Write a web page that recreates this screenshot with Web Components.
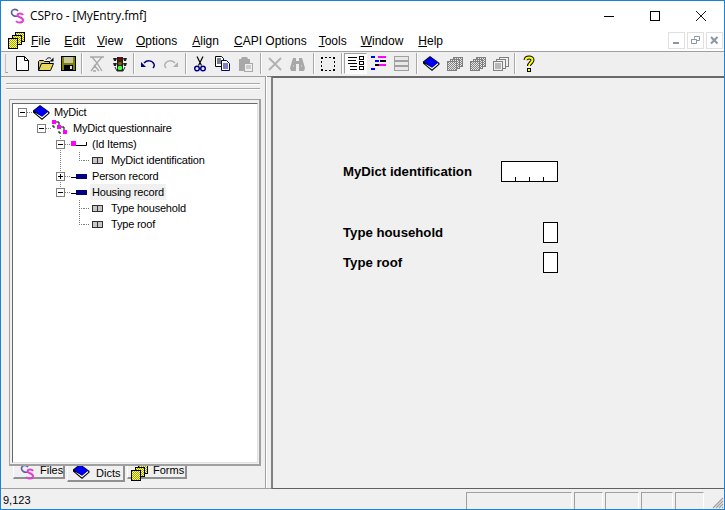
<!DOCTYPE html>
<html>
<head>
<meta charset="utf-8">
<title>CSPro</title>
<style>
  html, body { margin: 0; padding: 0; background: #f0f0f0; }
  body { font: 12px "Liberation Sans", sans-serif; color: #000; }
</style>
</head>
<body>
<cs-app></cs-app>

<script>
const dither = `<pattern id="d" width="2" height="2" patternUnits="userSpaceOnUse"><rect width="2" height="2" fill="#e8e8e8"/><rect width="1" height="1" fill="#808080"/><rect x="1" y="1" width="1" height="1" fill="#808080"/></pattern>`;
const ditherY = `<pattern id="y" width="2" height="2" patternUnits="userSpaceOnUse"><rect width="2" height="2" fill="#ffff66"/><rect width="1" height="1" fill="#a0a020"/><rect x="1" y="1" width="1" height="1" fill="#a0a020"/></pattern>`;

const bookShape = `
  <path d="M7 0 0 5.500v2L9 15l7.500-6.500V7z" fill="#000"/>
  <path d="M1.500 7.500 9 13.500l6.500-5.500-1-1L9 11.500z" fill="#fff"/>
  <path d="M7 1 1 5.700 9 11.800l6.200-5.300z" fill="#0000f0"/>`;

const stack = fill => `
  <rect x="6.500" y=".5" width="9" height="9" fill="${fill}" stroke="#808080"/>
  <rect x="3.500" y="2.500" width="9" height="9" fill="${fill}" stroke="#808080"/>
  <rect x=".5" y="4.500" width="9" height="9" fill="${fill}" stroke="#808080"/>`;

const ICONS = {
  app: [15, 16, `
    <path d="M8 3C6 .5 2 1 1.500 4c-.4 3 3 5 6.500 4" fill="none" stroke="#5a5aa8" stroke-width="1.600"/>
    <path d="M13 7c-1-2-5-2-5.500 0-.5 2.500 5.500 2 5.500 5 0 3-5 3.500-7 1" fill="none" stroke="#e040d0" stroke-width="2"/>`],
  forms: [17, 17, `${ditherY}
    <rect x="7.500" y=".5" width="9" height="9" fill="url(#y)" stroke="#000"/>
    <rect x="4.500" y="3.500" width="9" height="9" fill="url(#y)" stroke="#000"/>
    <rect x=".5" y="6.500" width="9" height="10" fill="url(#y)" stroke="#000"/>`],
  file: [13, 15, `<path d="M.5.5h8l4 4v10H.5z" fill="#fff" stroke="#000"/><path d="M8.500.5v4h4" fill="none" stroke="#000"/>`],
  open: [16, 14, `
    <path d="M.5 13.500v-9l1-1h4l1 1h5v2" fill="#d8c860" stroke="#000"/>
    <path d="M.5 13.500l3-7h12l-3 7z" fill="#e8d860" stroke="#000"/>
    <path d="M8 3c1-2 3-3 5-1.500" fill="none" stroke="#000"/><path d="M15.500.5v4h-4z" fill="#000"/>`],
  save: [15, 15, `
    <rect x=".5" y=".5" width="14" height="14" fill="#808000" stroke="#000"/>
    <rect x="3" y="1" width="9" height="6" fill="#c8c8a0"/>
    <rect x="3" y="9" width="9" height="5" fill="#000"/>
    <rect x="9" y="10" width="2" height="3" fill="#e0e0e0"/>`],
  filter: [16, 16, `
    <path d="M1 1h14M3 1l5 6 5-6M8 7l-6 8M8 7l5 8M4 15h3M5 9l5 6" fill="none" stroke="#a8a8a8" stroke-width="1.300"/>`],
  traffic: [16, 16, `
    <path d="M5 1h6v14H5zM1 2h4l-1 3H2zM15 2h-4l1 3h2zM1 7h4l-1 3H2zM15 7h-4l1 3h2z" fill="#202020"/>
    <circle cx="8" cy="3" r="1.800" fill="#900000"/>
    <circle cx="8" cy="7.500" r="1.800" fill="#806000"/>
    <circle cx="8" cy="12" r="2.300" fill="#40ff40"/>
    <path d="M3 11l2 4h6l2-4" fill="none" stroke="#202020"/>`],
  undo: [14, 10, `
    <path d="M3 4C6 1 11 1 13 5c.5 1.500 0 3-1 4" fill="none" stroke="#000080" stroke-width="1.500"/>
    <path d="M0 3l5 5H0z" fill="#000080"/>`],
  redo: [14, 10, `
    <path d="M11 4C8 1 3 1 1 5c-.5 1.500 0 3 1 4" fill="none" stroke="#b0b0b0" stroke-width="1.500"/>
    <path d="M14 3L9 8h5z" fill="#b0b0b0"/>`],
  cut: [12, 16, `
    <path d="M3 .5l4.500 9M9 .5L4.500 9.500" fill="none" stroke="#000" stroke-width="1.200"/>
    <circle cx="3" cy="12.500" r="2.300" fill="none" stroke="#000080" stroke-width="1.500"/>
    <circle cx="9" cy="12.500" r="2.300" fill="none" stroke="#000080" stroke-width="1.500"/>`],
  copy: [15, 15, `
    <path d="M.5.5h6l2 2v8H.5z" fill="#fff" stroke="#000"/>
    <path d="M2 3h4M2 5h5M2 7h5" stroke="#000"/>
    <path d="M6.500 4.500h5l3 3v7h-8z" fill="#fff" stroke="#000080"/>
    <path d="M8 8h5M8 10h5M8 12h5" stroke="#000080"/>`],
  paste: [15, 16, `
    <path d="M1 3h2l1-2h5l1 2h2v12H1z" fill="#a8a8a8"/>
    <rect x="6.500" y="7.500" width="8" height="8" fill="#f0f0f0" stroke="#a8a8a8"/>
    <path d="M8 10h5M8 12h5" stroke="#a8a8a8"/>`],
  del: [14, 14, `<path d="M1 1l12 12M13 1L1 13" stroke="#b0b0b0" stroke-width="1.800" fill="none"/>`],
  find: [15, 14, `
    <path d="M3 1h3v3h3V1h3l3 10-1 3H9V7H6v7H1l-1-3z" fill="#a8a8a8"/>
    <path d="M3 9h1M11 9h1" stroke="#e0e0e0"/>`],
  select: [14, 14, `
    <rect x="0" y="0" width="2" height="2"/><rect x="12" y="0" width="2" height="2"/>
    <rect x="0" y="12" width="2" height="2"/><rect x="12" y="12" width="2" height="2"/>
    <rect x="4" y="0" width="2" height="1"/><rect x="8" y="0" width="2" height="1"/>
    <rect x="4" y="13" width="2" height="1"/><rect x="8" y="13" width="2" height="1"/>
    <rect x="0" y="4" width="1" height="2"/><rect x="0" y="8" width="1" height="2"/>
    <rect x="13" y="4" width="1" height="2"/><rect x="13" y="8" width="1" height="2"/>`],
  logic: [16, 15, `
    <path d="M0 1.500h9M0 7.500h9M2 13.500h7" stroke="#000" stroke-width="1"/>
    <path d="M0 4.500h8M2 10.500h7" stroke="#000"/>
    <rect x="11.500" y=".5" width="4" height="3" fill="#fff" stroke="#000"/>
    <rect x="11.500" y="5.500" width="4" height="3" fill="#fff" stroke="#000"/>
    <rect x="11.500" y="10.500" width="4" height="3" fill="#fff" stroke="#000"/>`],
  order: [15, 15, `
    <rect x="0" y="0" width="4" height="2" fill="#0000ff"/><rect x="7" y="0" width="8" height="2" fill="#ff00ff"/>
    <rect x="4" y="4" width="4" height="2" fill="#0000ff"/><rect x="9" y="4" width="6" height="2" fill="#000"/>
    <rect x="4" y="8" width="4" height="2" fill="#000"/><rect x="8" y="8" width="7" height="2" fill="#ff00ff"/>
    <rect x="0" y="12" width="4" height="2" fill="#0000ff"/>`],
  rows: [15, 15, `
    <rect x=".5" y=".5" width="14" height="14" fill="#e8e8e8" stroke="#a0a0a0"/>
    <path d="M1 4.500h13M1 5.500h13M1 9.500h13M1 10.500h13" stroke="#a0a0a0"/>`],
  book: [17, 15, bookShape],
  grayStack: [16, 14, `${dither}${stack('url(#d)')}`],
  lineStack: [16, 14, `${stack('#f0f0f0')}<path d="M2 7h6M2 9h6M2 11h6" stroke="#808080"/>`],
  help: [12, 17, `
    <path d="M2.500 5C3 1.500 9.500 1.500 9.500 5c0 2.500-3.500 3-3.500 6" fill="none" stroke="#000" stroke-width="4"/>
    <rect x="4" y="13" width="4" height="4" fill="#000"/>
    <path d="M2.500 5C3 1.500 9.500 1.500 9.500 5c0 2.500-3.500 3-3.500 6" fill="none" stroke="#ffff00" stroke-width="2"/>
    <rect x="5" y="14" width="2" height="2" fill="#ffff00"/>`],
  quest: [17, 16, `
    <path d="M4 2h3v5M9 7h3v5" fill="none" stroke="#000"/>
    <path d="M1 5v2h2M7 11v2h2" fill="none" stroke="#000"/>
    <rect x="0" y="0" width="4" height="4" fill="#ff00ff"/>
    <rect x="5" y="5" width="4" height="4" fill="#ff00ff"/>
    <rect x="11" y="10" width="4" height="4" fill="#ff00ff"/>`],
  idItems: [16, 8, `
    <rect x="0" y="1" width="5" height="5" fill="#ff00ff"/>
    <path d="M5 5.500h10.500V2" fill="none" stroke="#000"/>`],
  record: [16, 6, `
    <path d="M0 4.500h5" stroke="#000"/>
    <rect x="5" y="1" width="11" height="5" fill="#000080"/>`],
  item: [11, 7, `
    <rect x=".5" y=".5" width="10" height="6" fill="#c8c8c8" stroke="#303030"/>
    <path d="M5.500 0v7" stroke="#303030"/>`],
  grip: [12, 12, `<path d="M11 1L1 11M11 4L4 11M11 7L7 11M11 10l-1 1" stroke="#a0a0a0" stroke-width="1.200"/>`]
};

class CsIcon extends HTMLElement {
  constructor() {
    super();
    const [w, h, body] = ICONS[this.getAttribute("name")];
    this.attachShadow({ mode: "open" }).innerHTML = `
      <style>:host { display: block; width: ${w}px; height: ${h}px; flex: none; } svg { display: block; }</style>
      <svg width="${w}" height="${h}" viewBox="0 0 ${w} ${h}">${body}</svg>`;
  }
}
customElements.define("cs-icon", CsIcon);

class CsTitleBar extends HTMLElement {
  constructor() {
    super();
    this.attachShadow({ mode: "open" }).innerHTML = `
      <style>
        :host { display: flex; align-items: center; height: 29px; background: #fff; padding-left: 9px; font: 12px "Open Sans", sans-serif; letter-spacing: -.15px; }
        .title { margin-left: 5px; flex: 1; }
        .btn { width: 46px; height: 29px; display: flex; align-items: center; justify-content: center; }
      </style>
      <cs-icon name="app"></cs-icon>
      <span class="title"><slot></slot></span>
      <div class="btn"><svg width="10" height="10"><path d="M0 5.500h10" stroke="#000"/></svg></div>
      <div class="btn"><svg width="10" height="10"><rect x=".5" y=".5" width="9" height="9" fill="none" stroke="#000"/></svg></div>
      <div class="btn"><svg width="10" height="10"><path d="M0 0l10 10M10 0L0 10" stroke="#000" stroke-width=".9"/></svg></div>`;
  }
}
customElements.define("cs-title-bar", CsTitleBar);

class CsMenuBar extends HTMLElement {
  constructor() {
    super();
    this.attachShadow({ mode: "open" }).innerHTML = `
      <style>
        :host { display: flex; align-items: center; height: 21px; background: #fff; padding: 0 1px 0 7px; border-bottom: 1px solid #a0a0a0; }
        .items { display: flex; flex: 1; margin-left: 6px; font-size: 12px; }
        .mdi { display: flex; gap: 2px; }
        .mdi div { width: 15px; height: 15px; border: 1px solid #e0e0e0; display: flex; align-items: center; justify-content: center; }
      </style>
      <cs-icon name="forms"></cs-icon>
      <div class="items"><slot></slot></div>
      <div class="mdi">
        <div><svg width="9" height="9"><rect x="1" y="6" width="6" height="2" fill="#8a96a4"/></svg></div>
        <div><svg width="9" height="9"><path d="M3.500 2.500V.5h5v4H6M.5 3.500h5v4h-5zM.5 3.500h5" fill="none" stroke="#8a96a4"/></svg></div>
        <div><svg width="9" height="9"><path d="M1 1l6.500 6.500M7.500 1L1 7.500" stroke="#8a96a4" stroke-width="2"/></svg></div>
      </div>`;
  }
}
customElements.define("cs-menu-bar", CsMenuBar);

class CsMenuItem extends HTMLElement {
  constructor() {
    super();
    this.attachShadow({ mode: "open" }).innerHTML = `
      <style>:host { display: block; white-space: nowrap; margin-right: var(--gap, 13px); }</style>
      <slot></slot>`;
    this.style.setProperty("--gap", (this.getAttribute("gap") || 13) + "px");
  }
}
customElements.define("cs-menu-item", CsMenuItem);

class CsToolBar extends HTMLElement {
  constructor() {
    super();
    this.attachShadow({ mode: "open" }).innerHTML = `
      <style>
        :host { display: flex; align-items: center; height: 23px; background: #efefef; padding-left: 4px; }
        .grip { width: 2px; height: 18px; border-left: 1px solid #c0c0c0; border-bottom: 1px solid #a0a0a0; margin-right: 3px; }
      </style>
      <div class="grip"></div>
      <slot></slot>`;
  }
}
customElements.define("cs-tool-bar", CsToolBar);

class CsToolBtn extends HTMLElement {
  constructor() {
    super();
    this.attachShadow({ mode: "open" }).innerHTML = `
      <style>
        :host { display: flex; align-items: center; justify-content: center; width: 23px; height: 21px; box-sizing: border-box; }
        :host([pressed]) { background: #fafafa; border: 1px solid; border-color: #a0a0a0 #fff #fff #a0a0a0; }
      </style>
      <cs-icon name="${this.getAttribute("icon")}"></cs-icon>`;
  }
}
customElements.define("cs-tool-btn", CsToolBtn);

class CsToolSep extends HTMLElement {
  constructor() {
    super();
    const w = this.getAttribute("w") || 5;
    const o = this.getAttribute("o") || 2;
    this.attachShadow({ mode: "open" }).innerHTML = `
      <style>
        :host { display: block; width: ${w}px; height: 21px; box-sizing: border-box; padding-left: ${o}px; }
        div { width: 1px; height: 21px; background: #a8a8a8; border-right: 1px solid #fff; }
      </style>
      <div></div>`;
  }
}
customElements.define("cs-tool-sep", CsToolSep);

class CsTreeNode extends HTMLElement {
  constructor() {
    super();
    const exp = this.getAttribute("exp");
    const mark = exp === "plus"
      ? `<path d="M2 4.500h5M4.500 2v5" stroke="#000"/>`
      : `<path d="M2 4.500h5" stroke="#000"/>`;
    const box = exp
      ? `<svg class="box" width="9" height="9"><rect x=".5" y=".5" width="8" height="8" fill="#fff" stroke="#808080"/>${mark}</svg>`
      : `<span class="leaf"></span>`;
    this.attachShadow({ mode: "open" }).innerHTML = `
      <style>
        :host { display: block; position: relative; }
        /* dotted connector back to the parent row */
        :host::before { content: ""; position: absolute; left: 4px; top: 0; width: 1px; height: 8px;
          background: repeating-linear-gradient(180deg, #808080 0 1px, transparent 1px 2px); }
        :host(:not(:last-child))::before { height: 100%; }
        :host([root])::before, :host([noline])::before { display: none; }
        .row { display: flex; align-items: center; height: 16px; position: relative; }
        .box { display: block; flex: none; position: relative; }
        .leaf { display: block; flex: none; width: 5px; height: 1px; margin-left: 4px;
          background: repeating-linear-gradient(90deg, #808080 0 1px, transparent 1px 2px); }
        .dots { width: 6px; height: 1px; flex: none;
          background: repeating-linear-gradient(90deg, #808080 0 1px, transparent 1px 2px); }
        .icon { width: 17px; flex: none; display: flex; }
        .text { margin-left: 2px; padding: 0 2px; line-height: 16px; white-space: nowrap; font-size: 11px; letter-spacing: -.2px; }
        :host([selected]) .text { background: #f0f0f0; }
        .kids { padding-left: 19px; }
      </style>
      <div class="row">
        ${box}
        <span class="dots"></span>
        <span class="icon"><cs-icon name="${this.getAttribute("icon")}" style="${this.getAttribute("icon-style") || ""}"></cs-icon></span>
        <span class="text">${this.getAttribute("label")}</span>
      </div>
      <div class="kids"><slot></slot></div>`;
  }
}
customElements.define("cs-tree-node", CsTreeNode);

class CsTab extends HTMLElement {
  constructor() {
    super();
    this.attachShadow({ mode: "open" }).innerHTML = `
      <style>
        :host { display: flex; align-items: flex-start; box-sizing: border-box; height: 15px; background: #f0f0f0;
          border: solid #909090; border-width: 0 2px 2px 1px; border-left-color: #fff; margin-right: 2px; flex: none; font-size: 11px; }
        :host([active]) { height: 18px; }
        .lbl { line-height: 12px; }
        :host([active]) .lbl { line-height: 19px; }
      </style>
      <cs-icon name="${this.getAttribute("icon")}"></cs-icon>
      <span class="lbl"><slot></slot></span>`;
    this.style.width = this.getAttribute("w") + "px";
    this.style.paddingLeft = this.getAttribute("pad") + "px";
    this.shadowRoot.querySelector(".lbl").style.marginLeft = this.getAttribute("gap") + "px";
  }
}
customElements.define("cs-tab", CsTab);

class CsSidePane extends HTMLElement {
  constructor() {
    super();
    this.attachShadow({ mode: "open" }).innerHTML = `
      <style>
        :host { display: flex; flex-direction: column; width: 264px; box-sizing: border-box; flex: none;
          border-top: 1px solid #a0a0a0; border-bottom: 1px solid #a0a0a0; background: #f0f0f0; }
        .gripper { margin: 6px 5px 0 5px; height: 4px; border-top: 1px solid #a8a8a8; border-bottom: 1px solid #a8a8a8;
          box-shadow: 0 1px 0 #fff, inset 0 1px 0 #fff; flex: none; }
        .tree { flex: 1; min-height: 0; margin: 10px 4px 0 8px; position: relative; z-index: 1;
          border: solid #a0a0a0; border-width: 1px 2px 2px 1px; padding: 3px 1px 1px 2px; background: #f0f0f0; display: flex; }
        .inner { flex: 1; background: #fff; border: 1px solid; border-color: #696969 #e0e0e0 #e0e0e0 #696969; padding-left: 5px; overflow: hidden; }
        .tabs { display: flex; margin: -2px 0 6px 12px; height: 18px; flex: none; overflow: visible; }
      </style>
      <div class="gripper"></div>
      <div class="tree"><div class="inner"><slot name="tree"></slot></div></div>
      <div class="tabs"><slot name="tabs"></slot></div>`;
  }
}
customElements.define("cs-side-pane", CsSidePane);

class CsFormRow extends HTMLElement {
  constructor() {
    super();
    const width = this.getAttribute("box") === "id" ? 57 : 15;
    const ticks = width === 57 ? `
      <svg width="55" height="19" style="display:block"><path d="M13.500 15v4M27.500 15v4M41.500 15v4" stroke="#000"/></svg>` : "";
    this.attachShadow({ mode: "open" }).innerHTML = `
      <style>
        :host { display: flex; justify-content: space-between; align-items: center; width: 215px; height: 21px; }
        .lbl { font: bold 13.200px "Liberation Sans", sans-serif; white-space: nowrap; }
        .box { box-sizing: border-box; width: ${width}px; height: 21px; background: #fff; border: 1px solid #000; }
      </style>
      <span class="lbl"><slot></slot></span>
      <div class="box">${ticks}</div>`;
  }
}
customElements.define("cs-form-row", CsFormRow);

class CsFormView extends HTMLElement {
  constructor() {
    super();
    this.attachShadow({ mode: "open" }).innerHTML = `
      <style>
        :host { display: flex; flex-direction: column; flex: 1; min-width: 0; box-sizing: border-box; background: #f0f0f0;
          border-left: 2px solid #808080; border-top: 2px solid #696969; border-bottom: 1px solid #606060; padding: 83px 0 0 70px; }
      </style>
      <slot></slot>`;
  }
}
customElements.define("cs-form-view", CsFormView);

class CsStatusBar extends HTMLElement {
  constructor() {
    super();
    this.attachShadow({ mode: "open" }).innerHTML = `
      <style>
        :host { display: flex; align-items: flex-end; height: 20px; background: #f0f0f0; padding-left: 2px; position: relative; font-size: 11px; }
        .msg { flex: 1; align-self: center; position: relative; top: 1px; }
        .cell { box-sizing: border-box; height: 17px; border: solid; border-width: 1px 1px 0 1px; border-color: #a0a0a0 #fff #a0a0a0 #a0a0a0; margin-right: 2px; }
        .grip { position: absolute; right: 0; bottom: 0; }
      </style>
      <span class="msg"><slot></slot></span>
      <div class="cell" style="width:106px"></div>
      <div class="cell" style="width:29px"></div>
      <div class="cell" style="width:34px"></div>
      <div class="cell" style="width:32px"></div>
      <div class="cell" style="width:29px;margin-right:20px"></div>
      <cs-icon class="grip" name="grip"></cs-icon>`;
  }
}
customElements.define("cs-status-bar", CsStatusBar);

class CsApp extends HTMLElement {
  constructor() {
    super();
    this.attachShadow({ mode: "open" }).innerHTML = `
      <style>
        :host { display: flex; flex-direction: column; width: 725px; height: 510px; box-sizing: border-box;
          border: 1px solid #1883d7; overflow: hidden; background: #f0f0f0; font: 12px "Liberation Sans", sans-serif; }
        .main { flex: 1; min-height: 0; display: flex; border-top: 1px solid #f0f0f0; box-shadow: inset 0 1px 0 #808080; }
        .split { width: 6px; flex: none; box-sizing: border-box; border-left: 1px solid #a0a0a0; box-shadow: inset 1px 0 0 #fff; border-bottom: 1px solid #a0a0a0; }
        cs-form-row.gap { margin-top: 40px; }
        cs-form-row.near { margin-top: 9px; }
        u { text-underline-offset: 1px; }
      </style>
      <cs-title-bar>CSPro - [MyEntry.fmf]</cs-title-bar>
      <cs-menu-bar>
        <cs-menu-item gap="14"><u>F</u>ile</cs-menu-item>
        <cs-menu-item gap="12"><u>E</u>dit</cs-menu-item>
        <cs-menu-item gap="13"><u>V</u>iew</cs-menu-item>
        <cs-menu-item gap="15"><u>O</u>ptions</cs-menu-item>
        <cs-menu-item gap="15"><u>A</u>lign</cs-menu-item>
        <cs-menu-item gap="12"><u>C</u>API Options</cs-menu-item>
        <cs-menu-item gap="14"><u>T</u>ools</cs-menu-item>
        <cs-menu-item gap="15"><u>W</u>indow</cs-menu-item>
        <cs-menu-item gap="0"><u>H</u>elp</cs-menu-item>
      </cs-menu-bar>
      <cs-tool-bar>
        <cs-tool-btn icon="file"></cs-tool-btn>
        <cs-tool-btn icon="open"></cs-tool-btn>
        <cs-tool-btn icon="save"></cs-tool-btn>
        <cs-tool-sep w="5" o="1"></cs-tool-sep>
        <cs-tool-btn icon="filter"></cs-tool-btn>
        <cs-tool-btn icon="traffic"></cs-tool-btn>
        <cs-tool-sep w="5" o="2"></cs-tool-sep>
        <cs-tool-btn icon="undo"></cs-tool-btn>
        <cs-tool-btn icon="redo"></cs-tool-btn>
        <cs-tool-sep w="6" o="3"></cs-tool-sep>
        <cs-tool-btn icon="cut"></cs-tool-btn>
        <cs-tool-btn icon="copy"></cs-tool-btn>
        <cs-tool-btn icon="paste"></cs-tool-btn>
        <cs-tool-sep w="6" o="3"></cs-tool-sep>
        <cs-tool-btn icon="del"></cs-tool-btn>
        <cs-tool-btn icon="find"></cs-tool-btn>
        <cs-tool-sep w="7" o="4"></cs-tool-sep>
        <cs-tool-btn icon="select"></cs-tool-btn>
        <cs-tool-sep w="5" o="2"></cs-tool-sep>
        <cs-tool-btn icon="logic" pressed></cs-tool-btn>
        <cs-tool-btn icon="order"></cs-tool-btn>
        <cs-tool-btn icon="rows"></cs-tool-btn>
        <cs-tool-sep w="7" o="3"></cs-tool-sep>
        <cs-tool-btn icon="book"></cs-tool-btn>
        <cs-tool-btn icon="grayStack"></cs-tool-btn>
        <cs-tool-btn icon="grayStack"></cs-tool-btn>
        <cs-tool-btn icon="lineStack"></cs-tool-btn>
        <cs-tool-sep w="5" o="2"></cs-tool-sep>
        <cs-tool-btn icon="help"></cs-tool-btn>
      </cs-tool-bar>
      <div class="main">
        <cs-side-pane>
          <cs-tree-node slot="tree" root exp="minus" icon="book" label="MyDict">
            <cs-tree-node noline exp="minus" icon="quest" label="MyDict questionnaire">
              <cs-tree-node exp="minus" icon="idItems" label="(Id Items)">
                <cs-tree-node icon="item" icon-style="margin-left:2px" label="MyDict identification"></cs-tree-node>
              </cs-tree-node>
              <cs-tree-node exp="plus" icon="record" label="Person record"></cs-tree-node>
              <cs-tree-node exp="minus" icon="record" selected label="Housing record">
                <cs-tree-node icon="item" icon-style="margin-left:2px" label="Type household"></cs-tree-node>
                <cs-tree-node icon="item" icon-style="margin-left:2px" label="Type roof"></cs-tree-node>
              </cs-tree-node>
            </cs-tree-node>
          </cs-tree-node>
          <cs-tab slot="tabs" icon="app" w="52" pad="6" gap="5">Files</cs-tab>
          <cs-tab slot="tabs" icon="book" w="58" pad="5" gap="6" active>Dicts</cs-tab>
          <cs-tab slot="tabs" icon="forms" w="60" pad="3" gap="5">Forms</cs-tab>
        </cs-side-pane>
        <div class="split"></div>
        <cs-form-view>
          <cs-form-row box="id">MyDict identification</cs-form-row>
          <cs-form-row class="gap">Type household</cs-form-row>
          <cs-form-row class="near">Type roof</cs-form-row>
        </cs-form-view>
      </div>
      <cs-status-bar>9,123</cs-status-bar>`;
  }
}
customElements.define("cs-app", CsApp);
</script>
</body>
</html>
